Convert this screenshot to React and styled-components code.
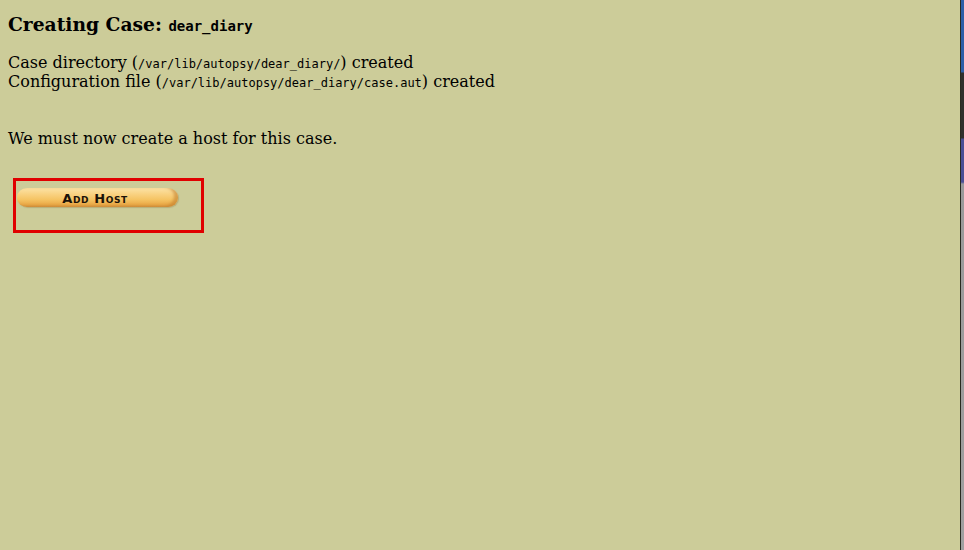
import React from "react";
import styled, { createGlobalStyle } from "styled-components";

const Global = createGlobalStyle`
  html, body { margin: 0; padding: 0; background: #cccc99; }
  body { font-family: "DejaVu Serif", serif; color: #000; }
`;

const Page = styled.div`
  position: relative;
  width: 964px;
  height: 550px;
  box-sizing: border-box;
  padding: 13px 8px 0 8px;
  background: #cccc99;
  overflow: hidden;
`;

const Title = styled.h3`
  margin: 0;
  font-family: "DejaVu Serif", serif;
  font-size: 18.7px;
  font-weight: bold;
  line-height: 22px;
`;

const TitleCode = styled.span`
  font-family: "DejaVu Sans Mono", monospace;
  font-size: 14px;
  font-weight: bold;
  line-height: 0;
`;

const Lines = styled.div`
  margin-top: 18px;
  font-size: 16px;
  line-height: 19px;
`;

const Code = styled.span`
  font-family: "DejaVu Sans Mono", monospace;
  font-size: 12px;
  line-height: 0;
`;

const Para = styled.div`
  margin-top: 38px;
  font-size: 16px;
  line-height: 19px;
`;

const ButtonFrame = styled.a`
  display: block;
  margin: 30px 0 0 5px;
  width: 185px;
  height: 49px;
  border: 3px solid #e00000;
  box-sizing: content-box;
  padding: 0;
`;

const Pill = styled.div`
  margin: 7px 0 0 1px;
  width: 161px;
  height: 19px;
  border-radius: 10px / 9px;
  background: linear-gradient(
    to bottom,
    #fbe3a6 0%,
    #f9d384 30%,
    #f5c464 60%,
    #eaa947 88%,
    #d99a45 100%
  );
  box-shadow: inset -4px -1px 3px rgba(190, 120, 40, 0.55), 1px 1px 1px rgba(150, 120, 60, 0.35);
  display: flex;
  align-items: center;
  justify-content: center;
  padding-right: 5px;
  box-sizing: border-box;
`;

const PillText = styled.span`
  font-family: "DejaVu Sans", sans-serif;
  font-weight: bold;
  font-size: 13px;
  font-variant: small-caps;
  letter-spacing: 0.6px;
  color: #1a1208;
  line-height: 1;
  margin-top: 1px;
`;

const EdgeStrip = styled.div`
  position: absolute;
  top: 0;
  right: 0;
  width: 3px;
  height: 550px;
  border-left: 1px solid #2a2a20;
  background: linear-gradient(
    to bottom,
    #2d5fa8 0px,
    #2d5fa8 72px,
    #30302c 73px,
    #30302c 138px,
    #4a4f95 139px,
    #4a4f95 182px,
    #9a9a9a 184px,
    #a0a0a0 100%
  );
`;

export default function App() {
  return (
    <>
      <Global />
      <Page>
        <Title>
          Creating Case: <TitleCode>dear_diary</TitleCode>
        </Title>
        <Lines>
          <div>
            Case directory (<Code>/var/lib/autopsy/dear_diary/</Code>) created
          </div>
          <div>
            Configuration file (<Code>/var/lib/autopsy/dear_diary/case.aut</Code>) created
          </div>
        </Lines>
        <Para>We must now create a host for this case.</Para>
        <ButtonFrame>
          <Pill>
            <PillText>Add Host</PillText>
          </Pill>
        </ButtonFrame>
        <EdgeStrip />
      </Page>
    </>
  );
}
